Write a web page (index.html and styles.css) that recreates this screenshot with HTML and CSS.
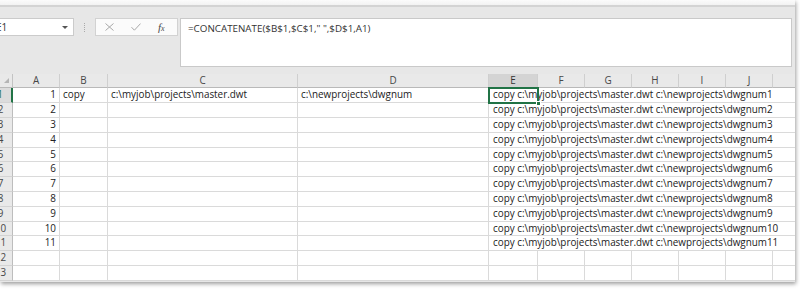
FILE: index.html
```html
<!DOCTYPE html>
<html>
<head>
<meta charset="utf-8">
<title>Sheet</title>
<link rel="stylesheet" href="styles.css">
</head>
<body>
<div class="win">
  <div class="ribbon-edge"></div>
  <div class="fbar-row">
    <div class="namebox"><span class="nb-text">E1</span><span class="nb-arrow"></span></div>
    <div class="grip"></div>
    <div class="fbtns">
      <svg class="ic" width="9" height="8" viewBox="0 0 9 8"><path d="M0.5 0.5L8.5 7.5M8.5 0.5L0.5 7.5" stroke="#a8a8a8" stroke-width="1" fill="none"/></svg>
      <svg class="ic" width="10" height="8" viewBox="0 0 10 8"><path d="M0.5 4.2L3.4 7.2L9.5 0.6" stroke="#a8a8a8" stroke-width="1" fill="none"/></svg>
      <span class="fx">f<span class="fx-x">x</span></span>
    </div>
    <div class="formula">=CONCATENATE($B$1,$C$1," ",$D$1,A1)</div>
  </div>
  <div class="sheet">
    <div class="corner"><i class="tri"></i></div>
    <div class="ch">A</div><div class="ch">B</div><div class="ch">C</div><div class="ch">D</div><div class="ch on">E</div><div class="ch">F</div><div class="ch">G</div><div class="ch">H</div><div class="ch">I</div><div class="ch">J</div><div class="ch"></div>

    <div class="rh on">1</div><div class="c num">1</div><div class="c">copy</div><div class="c">c:\myjob\projects\master.dwt</div><div class="c">c:\newprojects\dwgnum</div><div class="c span cur">copy c:\myjob\projects\master.dwt c:\newprojects\dwgnum1<span class="sel"><i class="handle"></i></span></div>
    <div class="rh">2</div><div class="c num">2</div><div class="c"></div><div class="c"></div><div class="c"></div><div class="c span">copy c:\myjob\projects\master.dwt c:\newprojects\dwgnum2</div>
    <div class="rh">3</div><div class="c num">3</div><div class="c"></div><div class="c"></div><div class="c"></div><div class="c span">copy c:\myjob\projects\master.dwt c:\newprojects\dwgnum3</div>
    <div class="rh">4</div><div class="c num">4</div><div class="c"></div><div class="c"></div><div class="c"></div><div class="c span">copy c:\myjob\projects\master.dwt c:\newprojects\dwgnum4</div>
    <div class="rh">5</div><div class="c num">5</div><div class="c"></div><div class="c"></div><div class="c"></div><div class="c span">copy c:\myjob\projects\master.dwt c:\newprojects\dwgnum5</div>
    <div class="rh">6</div><div class="c num">6</div><div class="c"></div><div class="c"></div><div class="c"></div><div class="c span">copy c:\myjob\projects\master.dwt c:\newprojects\dwgnum6</div>
    <div class="rh">7</div><div class="c num">7</div><div class="c"></div><div class="c"></div><div class="c"></div><div class="c span">copy c:\myjob\projects\master.dwt c:\newprojects\dwgnum7</div>
    <div class="rh">8</div><div class="c num">8</div><div class="c"></div><div class="c"></div><div class="c"></div><div class="c span">copy c:\myjob\projects\master.dwt c:\newprojects\dwgnum8</div>
    <div class="rh">9</div><div class="c num">9</div><div class="c"></div><div class="c"></div><div class="c"></div><div class="c span">copy c:\myjob\projects\master.dwt c:\newprojects\dwgnum9</div>
    <div class="rh">10</div><div class="c num">10</div><div class="c"></div><div class="c"></div><div class="c"></div><div class="c span">copy c:\myjob\projects\master.dwt c:\newprojects\dwgnum10</div>
    <div class="rh">11</div><div class="c num">11</div><div class="c"></div><div class="c"></div><div class="c"></div><div class="c span">copy c:\myjob\projects\master.dwt c:\newprojects\dwgnum11</div>
    <div class="rh">12</div><div class="c"></div><div class="c"></div><div class="c"></div><div class="c"></div><div class="c"></div><div class="c"></div><div class="c"></div><div class="c"></div><div class="c"></div><div class="c"></div><div class="c"></div>
    <div class="rh">13</div><div class="c"></div><div class="c"></div><div class="c"></div><div class="c"></div><div class="c"></div><div class="c"></div><div class="c"></div><div class="c"></div><div class="c"></div><div class="c"></div><div class="c"></div>
  </div>
</div>
</body>
</html>
```

FILE: styles.css
```css
* { box-sizing: border-box; }

html, body {
  margin: 0;
  padding: 0;
  width: 800px;
  height: 291px;
  overflow: hidden;
  background: #ffffff;
  font-family: "Open Sans", "Liberation Sans", sans-serif;
}

.win {
  width: 795px;
  height: 282px;
  background: #e7e7e7;
  box-shadow: 1px 2px 4px rgba(0, 0, 0, 0.38);
  overflow: hidden;
  display: flex;
  flex-direction: column;
}

.ribbon-edge {
  height: 7px;
  flex: none;
  background: linear-gradient(#fbfbfb, #f2f2f2);
  border-bottom: 2px solid #d3d3d3;
}

.fbar-row {
  display: flex;
  align-items: flex-start;
  padding-top: 11px;
  flex: none;
}

.namebox {
  width: 82px;
  height: 18px;
  margin-left: -8px;
  background: #ffffff;
  border: 1px solid #cbcbcb;
  display: flex;
  align-items: center;
  justify-content: space-between;
  padding: 0 4px 0 3px;
  font-size: 10px;
  color: #333;
}

.nb-arrow {
  width: 0;
  height: 0;
  border-left: 3px solid transparent;
  border-right: 3px solid transparent;
  border-top: 3px solid #555;
  margin-right: 1px;
}

.grip {
  width: 1px;
  height: 9px;
  margin: 5px 10px 0 10px;
  border-left: 1px dotted #a9a9a9;
}

.fbtns {
  width: 83px;
  height: 18px;
  background: #fbfbfb;
  border: 1px solid #d2d2d2;
  display: flex;
  align-items: center;
  padding-left: 9px;
  gap: 17px;
}

.ic { display: block; }

.fx {
  font-family: "Liberation Serif", serif;
  font-style: italic;
  font-size: 11px;
  color: #4a4a4a;
  line-height: 1;
}
.fx-x { font-size: 8px; }

.formula {
  margin-left: 2px;
  width: 612px;
  height: 49px;
  background: #ffffff;
  border: 1px solid #c9c9c9;
  padding: 2px 0 0 7px;
  font-size: 9.8px;
  line-height: 16px;
  color: #333;
}

.sheet {
  margin-top: 6.6px;
  margin-left: -30px;
  display: grid;
  grid-template-columns: 43px 47px 48px 190px 191px 49px 47px 47px 47px 47px 47px 60px;
  grid-auto-rows: 14.8px;
  background: #ffffff;
  font-size: 9.9px;
  color: #222;
}

.corner {
  background: #e9e9e9;
  border-right: 1px solid #c3c3c3;
  border-bottom: 1px solid #b9b9b9;
  display: flex;
  align-items: flex-end;
  justify-content: flex-end;
  padding: 0 3px 4px 0;
}

.tri {
  width: 0;
  height: 0;
  border-left: 5px solid transparent;
  border-bottom: 5px solid #b5b5b5;
}

.ch {
  background: #e9e9e9;
  border-right: 1px solid #cfcfcf;
  border-bottom: 1px solid #b9b9b9;
  text-align: center;
  line-height: 12.8px;
  color: #474747;
}

.ch.on {
  background: #d4d4d4;
  color: #333;
}

.rh {
  background: #e9e9e9;
  border-right: 1px solid #bdbdbd;
  border-bottom: 1px solid #d3d3d3;
  text-align: center;
  padding-left: 19px;
  padding-right: 0;
  line-height: 13.8px;
  color: #474747;
}

.rh.on {
  background: #dcdcdc;
  border-right: 2px solid #217346;
  color: #217346;
}

.c {
  border-right: 1px solid #dadada;
  border-bottom: 1px solid #dadada;
  padding: 0 3px;
  line-height: 13.8px;
  white-space: nowrap;
  overflow: visible;
}

.c.num { text-align: right; }

.c.span {
  grid-column: span 7;
  padding-left: 4px;
}

.c.cur { position: relative; }

.sel {
  position: absolute;
  left: -1px;
  top: -1px;
  width: 51px;
  height: 16.8px;
  border: 2px solid #217346;
}

.handle {
  position: absolute;
  right: -4px;
  bottom: -4px;
  width: 5px;
  height: 5px;
  background: #217346;
  border: 1px solid #ffffff;
}
```
